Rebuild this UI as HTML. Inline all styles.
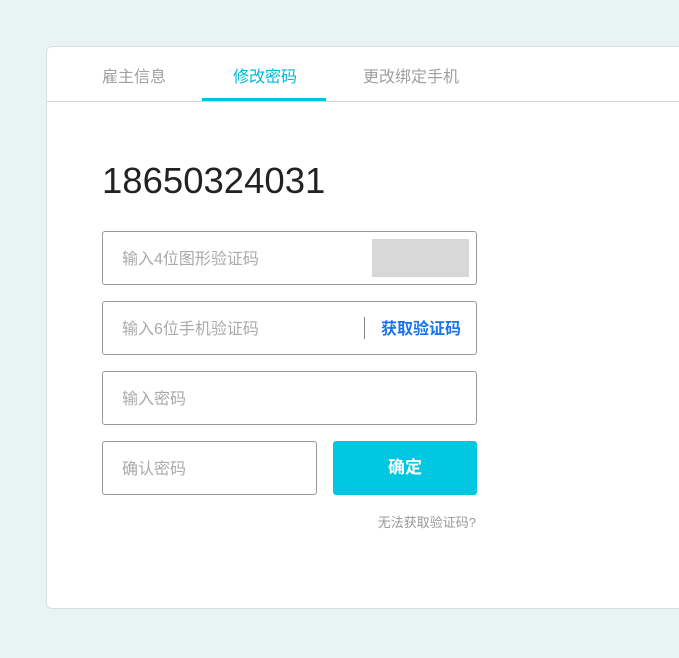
<!DOCTYPE html>
<html><head><meta charset="utf-8"><style>
*{margin:0;padding:0;box-sizing:border-box}
body{width:679px;height:658px;background:#e8f4f4;font-family:"Liberation Sans","Noto Sans CJK SC",sans-serif;position:relative;overflow:hidden}
.card{position:absolute;left:46px;top:46px;width:660px;height:563px;background:#fff;border:1px solid #dcdfe0;border-radius:6px}
.tabs{position:absolute;left:0;top:0;right:0;height:55px;border-bottom:1px solid #cfd3d5}
.tab{position:absolute;top:16px;font-size:16px;color:#a0a0a0}
.ul{position:absolute;left:155px;top:51px;width:124px;height:3px;background:#00c1de}
.phone{position:absolute;left:55px;top:113px;font-size:36.5px;color:#222}
.in{position:absolute;height:54px;border:1px solid #999;border-radius:3px;font-size:16px;color:#aaa;padding-left:19px;line-height:55px}
.btn{position:absolute;left:286px;top:394px;width:144px;height:54px;background:#00c8e0;border-radius:3px;color:#fff;font-size:17px;text-align:center;line-height:54px;font-weight:bold}
</style></head><body>
<div class="card">
<div class="tabs">
<div class="tab" style="left:55px">雇主信息</div>
<div class="tab" style="left:186px;color:#00b8d8">修改密码</div>
<div class="tab" style="left:316px">更改绑定手机</div>
<div class="ul"></div>
</div>
<div class="phone">18650324031</div>
<div class="in" style="left:55px;top:184px;width:375px">输入4位图形验证码<div style="position:absolute;left:269px;top:7px;width:97px;height:38px;background:#d8d8d8"></div></div>
<div class="in" style="left:55px;top:254px;width:375px">输入6位手机验证码<div style="position:absolute;left:261px;top:15px;width:1px;height:22px;background:#888"></div><div style="position:absolute;left:278px;top:0;color:#1a73e8;font-weight:bold">获取验证码</div></div>
<div class="in" style="left:55px;top:324px;width:375px">输入密码</div>
<div class="in" style="left:55px;top:394px;width:215px">确认密码</div>
<div class="btn">确定</div>
<div style="position:absolute;right:229px;top:465px;font-size:13px;color:#999">无法获取验证码?</div>
</div>
</body></html>
